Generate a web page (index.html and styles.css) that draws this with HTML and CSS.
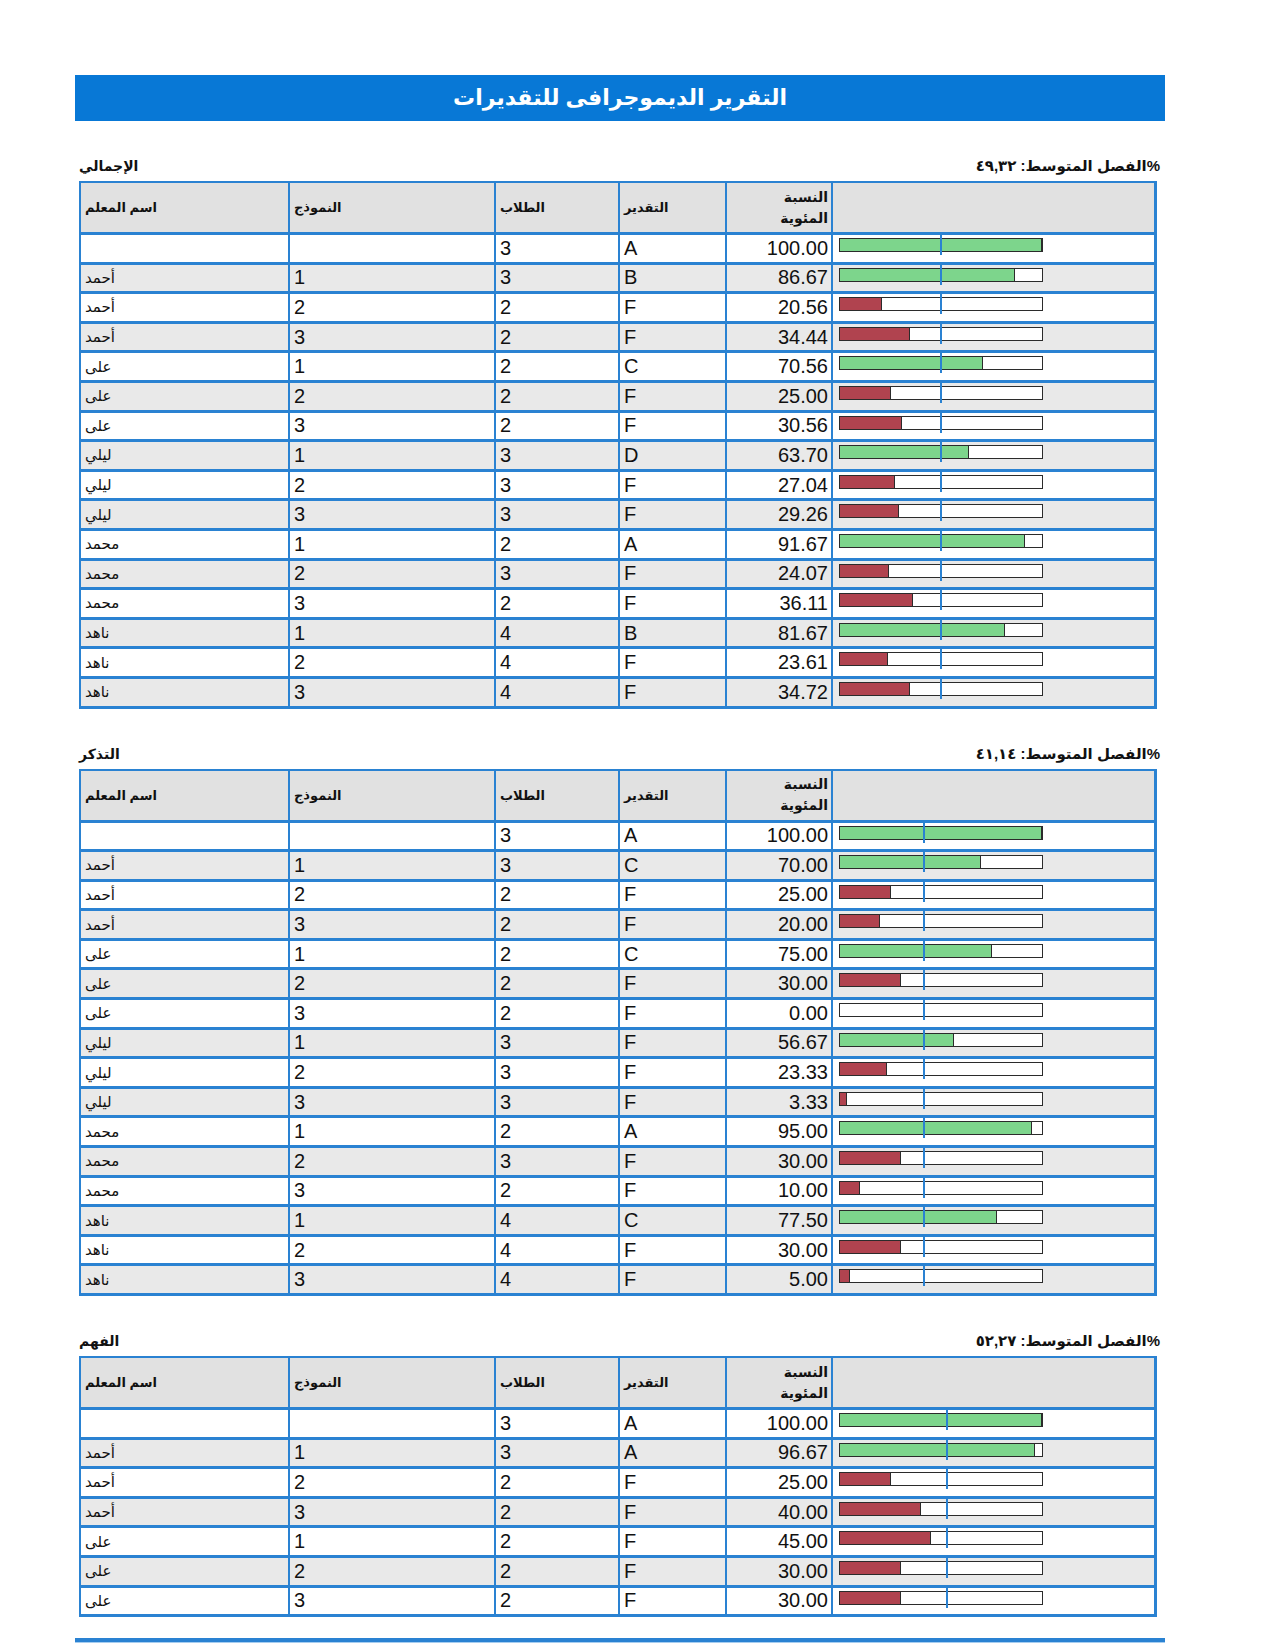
FILE: index.html
```html
<!DOCTYPE html>
<html lang="ar">
<head>
<meta charset="utf-8">
<title>التقرير الديموجرافى للتقديرات</title>
<link rel="stylesheet" href="styles.css">
</head>
<body>
<div class="page">
  <div class="titlebar">التقرير الديموجرافى للتقديرات</div>

  <section class="section">
    <div class="sec-head">
      <span class="sec-name">الإجمالي</span>
      <span class="sec-avg" dir="rtl">%الفصل المتوسط: <span class="avgnum">٤٩,٣٢</span></span>
    </div>
    <div class="tbl" style="--avg:49.32%">
      <div class="row head"><div class="c">اسم المعلم</div><div class="c">النموذج</div><div class="c">الطلاب</div><div class="c">التقدير</div><div class="c hp">النسبة<br>المئوية</div><div class="c"></div></div>
      <div class="row"><div class="c"></div><div class="c num"></div><div class="c num">3</div><div class="c num">A</div><div class="c pct">100.00</div><div class="c barc"><div class="bar"><div class="fill good" style="width:100%"></div><div class="mark"></div></div></div></div>
      <div class="row"><div class="c nm">أحمد</div><div class="c num">1</div><div class="c num">3</div><div class="c num">B</div><div class="c pct">86.67</div><div class="c barc"><div class="bar"><div class="fill good" style="width:86.67%"></div><div class="mark"></div></div></div></div>
      <div class="row"><div class="c nm">أحمد</div><div class="c num">2</div><div class="c num">2</div><div class="c num">F</div><div class="c pct">20.56</div><div class="c barc"><div class="bar"><div class="fill bad" style="width:20.56%"></div><div class="mark"></div></div></div></div>
      <div class="row"><div class="c nm">أحمد</div><div class="c num">3</div><div class="c num">2</div><div class="c num">F</div><div class="c pct">34.44</div><div class="c barc"><div class="bar"><div class="fill bad" style="width:34.44%"></div><div class="mark"></div></div></div></div>
      <div class="row"><div class="c nm">على</div><div class="c num">1</div><div class="c num">2</div><div class="c num">C</div><div class="c pct">70.56</div><div class="c barc"><div class="bar"><div class="fill good" style="width:70.56%"></div><div class="mark"></div></div></div></div>
      <div class="row"><div class="c nm">على</div><div class="c num">2</div><div class="c num">2</div><div class="c num">F</div><div class="c pct">25.00</div><div class="c barc"><div class="bar"><div class="fill bad" style="width:25%"></div><div class="mark"></div></div></div></div>
      <div class="row"><div class="c nm">على</div><div class="c num">3</div><div class="c num">2</div><div class="c num">F</div><div class="c pct">30.56</div><div class="c barc"><div class="bar"><div class="fill bad" style="width:30.56%"></div><div class="mark"></div></div></div></div>
      <div class="row"><div class="c nm">ليلي</div><div class="c num">1</div><div class="c num">3</div><div class="c num">D</div><div class="c pct">63.70</div><div class="c barc"><div class="bar"><div class="fill good" style="width:63.7%"></div><div class="mark"></div></div></div></div>
      <div class="row"><div class="c nm">ليلي</div><div class="c num">2</div><div class="c num">3</div><div class="c num">F</div><div class="c pct">27.04</div><div class="c barc"><div class="bar"><div class="fill bad" style="width:27.04%"></div><div class="mark"></div></div></div></div>
      <div class="row"><div class="c nm">ليلي</div><div class="c num">3</div><div class="c num">3</div><div class="c num">F</div><div class="c pct">29.26</div><div class="c barc"><div class="bar"><div class="fill bad" style="width:29.26%"></div><div class="mark"></div></div></div></div>
      <div class="row"><div class="c nm">محمد</div><div class="c num">1</div><div class="c num">2</div><div class="c num">A</div><div class="c pct">91.67</div><div class="c barc"><div class="bar"><div class="fill good" style="width:91.67%"></div><div class="mark"></div></div></div></div>
      <div class="row"><div class="c nm">محمد</div><div class="c num">2</div><div class="c num">3</div><div class="c num">F</div><div class="c pct">24.07</div><div class="c barc"><div class="bar"><div class="fill bad" style="width:24.07%"></div><div class="mark"></div></div></div></div>
      <div class="row"><div class="c nm">محمد</div><div class="c num">3</div><div class="c num">2</div><div class="c num">F</div><div class="c pct">36.11</div><div class="c barc"><div class="bar"><div class="fill bad" style="width:36.11%"></div><div class="mark"></div></div></div></div>
      <div class="row"><div class="c nm">ناهد</div><div class="c num">1</div><div class="c num">4</div><div class="c num">B</div><div class="c pct">81.67</div><div class="c barc"><div class="bar"><div class="fill good" style="width:81.67%"></div><div class="mark"></div></div></div></div>
      <div class="row"><div class="c nm">ناهد</div><div class="c num">2</div><div class="c num">4</div><div class="c num">F</div><div class="c pct">23.61</div><div class="c barc"><div class="bar"><div class="fill bad" style="width:23.61%"></div><div class="mark"></div></div></div></div>
      <div class="row"><div class="c nm">ناهد</div><div class="c num">3</div><div class="c num">4</div><div class="c num">F</div><div class="c pct">34.72</div><div class="c barc"><div class="bar"><div class="fill bad" style="width:34.72%"></div><div class="mark"></div></div></div></div>
    </div>
  </section>

  <section class="section">
    <div class="sec-head">
      <span class="sec-name">التذكر</span>
      <span class="sec-avg" dir="rtl">%الفصل المتوسط: <span class="avgnum">٤١,١٤</span></span>
    </div>
    <div class="tbl" style="--avg:41.14%">
      <div class="row head"><div class="c">اسم المعلم</div><div class="c">النموذج</div><div class="c">الطلاب</div><div class="c">التقدير</div><div class="c hp">النسبة<br>المئوية</div><div class="c"></div></div>
      <div class="row"><div class="c"></div><div class="c num"></div><div class="c num">3</div><div class="c num">A</div><div class="c pct">100.00</div><div class="c barc"><div class="bar"><div class="fill good" style="width:100%"></div><div class="mark"></div></div></div></div>
      <div class="row"><div class="c nm">أحمد</div><div class="c num">1</div><div class="c num">3</div><div class="c num">C</div><div class="c pct">70.00</div><div class="c barc"><div class="bar"><div class="fill good" style="width:70%"></div><div class="mark"></div></div></div></div>
      <div class="row"><div class="c nm">أحمد</div><div class="c num">2</div><div class="c num">2</div><div class="c num">F</div><div class="c pct">25.00</div><div class="c barc"><div class="bar"><div class="fill bad" style="width:25%"></div><div class="mark"></div></div></div></div>
      <div class="row"><div class="c nm">أحمد</div><div class="c num">3</div><div class="c num">2</div><div class="c num">F</div><div class="c pct">20.00</div><div class="c barc"><div class="bar"><div class="fill bad" style="width:20%"></div><div class="mark"></div></div></div></div>
      <div class="row"><div class="c nm">على</div><div class="c num">1</div><div class="c num">2</div><div class="c num">C</div><div class="c pct">75.00</div><div class="c barc"><div class="bar"><div class="fill good" style="width:75%"></div><div class="mark"></div></div></div></div>
      <div class="row"><div class="c nm">على</div><div class="c num">2</div><div class="c num">2</div><div class="c num">F</div><div class="c pct">30.00</div><div class="c barc"><div class="bar"><div class="fill bad" style="width:30%"></div><div class="mark"></div></div></div></div>
      <div class="row"><div class="c nm">على</div><div class="c num">3</div><div class="c num">2</div><div class="c num">F</div><div class="c pct">0.00</div><div class="c barc"><div class="bar"><div class="mark"></div></div></div></div>
      <div class="row"><div class="c nm">ليلي</div><div class="c num">1</div><div class="c num">3</div><div class="c num">F</div><div class="c pct">56.67</div><div class="c barc"><div class="bar"><div class="fill good" style="width:56.67%"></div><div class="mark"></div></div></div></div>
      <div class="row"><div class="c nm">ليلي</div><div class="c num">2</div><div class="c num">3</div><div class="c num">F</div><div class="c pct">23.33</div><div class="c barc"><div class="bar"><div class="fill bad" style="width:23.33%"></div><div class="mark"></div></div></div></div>
      <div class="row"><div class="c nm">ليلي</div><div class="c num">3</div><div class="c num">3</div><div class="c num">F</div><div class="c pct">3.33</div><div class="c barc"><div class="bar"><div class="fill bad" style="width:3.33%"></div><div class="mark"></div></div></div></div>
      <div class="row"><div class="c nm">محمد</div><div class="c num">1</div><div class="c num">2</div><div class="c num">A</div><div class="c pct">95.00</div><div class="c barc"><div class="bar"><div class="fill good" style="width:95%"></div><div class="mark"></div></div></div></div>
      <div class="row"><div class="c nm">محمد</div><div class="c num">2</div><div class="c num">3</div><div class="c num">F</div><div class="c pct">30.00</div><div class="c barc"><div class="bar"><div class="fill bad" style="width:30%"></div><div class="mark"></div></div></div></div>
      <div class="row"><div class="c nm">محمد</div><div class="c num">3</div><div class="c num">2</div><div class="c num">F</div><div class="c pct">10.00</div><div class="c barc"><div class="bar"><div class="fill bad" style="width:10%"></div><div class="mark"></div></div></div></div>
      <div class="row"><div class="c nm">ناهد</div><div class="c num">1</div><div class="c num">4</div><div class="c num">C</div><div class="c pct">77.50</div><div class="c barc"><div class="bar"><div class="fill good" style="width:77.5%"></div><div class="mark"></div></div></div></div>
      <div class="row"><div class="c nm">ناهد</div><div class="c num">2</div><div class="c num">4</div><div class="c num">F</div><div class="c pct">30.00</div><div class="c barc"><div class="bar"><div class="fill bad" style="width:30%"></div><div class="mark"></div></div></div></div>
      <div class="row"><div class="c nm">ناهد</div><div class="c num">3</div><div class="c num">4</div><div class="c num">F</div><div class="c pct">5.00</div><div class="c barc"><div class="bar"><div class="fill bad" style="width:5%"></div><div class="mark"></div></div></div></div>
    </div>
  </section>

  <section class="section">
    <div class="sec-head">
      <span class="sec-name">الفهم</span>
      <span class="sec-avg" dir="rtl">%الفصل المتوسط: <span class="avgnum">٥٢,٢٧</span></span>
    </div>
    <div class="tbl" style="--avg:52.27%">
      <div class="row head"><div class="c">اسم المعلم</div><div class="c">النموذج</div><div class="c">الطلاب</div><div class="c">التقدير</div><div class="c hp">النسبة<br>المئوية</div><div class="c"></div></div>
      <div class="row"><div class="c"></div><div class="c num"></div><div class="c num">3</div><div class="c num">A</div><div class="c pct">100.00</div><div class="c barc"><div class="bar"><div class="fill good" style="width:100%"></div><div class="mark"></div></div></div></div>
      <div class="row"><div class="c nm">أحمد</div><div class="c num">1</div><div class="c num">3</div><div class="c num">A</div><div class="c pct">96.67</div><div class="c barc"><div class="bar"><div class="fill good" style="width:96.67%"></div><div class="mark"></div></div></div></div>
      <div class="row"><div class="c nm">أحمد</div><div class="c num">2</div><div class="c num">2</div><div class="c num">F</div><div class="c pct">25.00</div><div class="c barc"><div class="bar"><div class="fill bad" style="width:25%"></div><div class="mark"></div></div></div></div>
      <div class="row"><div class="c nm">أحمد</div><div class="c num">3</div><div class="c num">2</div><div class="c num">F</div><div class="c pct">40.00</div><div class="c barc"><div class="bar"><div class="fill bad" style="width:40%"></div><div class="mark"></div></div></div></div>
      <div class="row"><div class="c nm">على</div><div class="c num">1</div><div class="c num">2</div><div class="c num">F</div><div class="c pct">45.00</div><div class="c barc"><div class="bar"><div class="fill bad" style="width:45%"></div><div class="mark"></div></div></div></div>
      <div class="row"><div class="c nm">على</div><div class="c num">2</div><div class="c num">2</div><div class="c num">F</div><div class="c pct">30.00</div><div class="c barc"><div class="bar"><div class="fill bad" style="width:30%"></div><div class="mark"></div></div></div></div>
      <div class="row"><div class="c nm">على</div><div class="c num">3</div><div class="c num">2</div><div class="c num">F</div><div class="c pct">30.00</div><div class="c barc"><div class="bar"><div class="fill bad" style="width:30%"></div><div class="mark"></div></div></div></div>
    </div>
  </section>

  <div class="bottom-rule"></div>
</div>
</body>
</html>
```

FILE: styles.css
```css
html, body {
  margin: 0;
  padding: 0;
  background: #ffffff;
}

body {
  font-family: "Liberation Sans", "DejaVu Sans", sans-serif;
  color: #111111;
}

.page {
  width: 1090px;
  padding: 75px 0 0 75px;
}

.titlebar {
  height: 46px;
  line-height: 46px;
  background: #0878d6;
  color: #ffffff;
  font-size: 22px;
  font-weight: bold;
  text-align: center;
}

.section {
  margin-left: 4px;
}

.sec-head {
  width: 1081px;
  display: flex;
  justify-content: space-between;
  align-items: center;
  height: 22px;
  margin-top: 34px;
  margin-bottom: 4px;
  font-weight: bold;
}

.sec-name {
  font-size: 14px;
}

.sec-avg {
  font-size: 15px;
}

.avgnum {
  letter-spacing: 2px;
}

.tbl {
  width: 1078px;
  box-sizing: border-box;
  border: 2px solid #2a82d2;
  border-right-width: 3px;
  border-bottom-width: 3px;
}

.row {
  display: grid;
  grid-template-columns: 207px 206px 124px 107px 106px 1fr;
  height: 29.6px;
  box-sizing: border-box;
  border-top: 3px solid #2a82d2;
  background: #ffffff;
}

.row:nth-child(odd) {
  background: #e9e9e9;
}

.row.head {
  height: 49px;
  border-top: 0;
  background: #e1e1e1;
}

.c {
  box-sizing: border-box;
  border-left: 2px solid #2a82d2;
  padding: 0 4px;
  display: flex;
  align-items: center;
  overflow: hidden;
  white-space: nowrap;
}

.c:first-child {
  border-left: 0;
}

.head .c {
  font-size: 13px;
  font-weight: bold;
}

.head .hp {
  justify-content: flex-end;
  text-align: right;
  line-height: 21px;
  font-size: 14px;
  padding-right: 3px;
}

.num {
  font-size: 20px;
}

.nm {
  font-size: 15px;
}

.pct {
  font-size: 20px;
  justify-content: flex-end;
  padding-right: 3px;
}

.barc {
  align-items: flex-start;
  padding: 3px 0 0 6px;
}

.bar {
  position: relative;
  width: 204px;
  height: 14px;
  box-sizing: border-box;
  border: 1px solid #2b2b2b;
  background: #ffffff;
  display: flex;
}

.fill {
  height: 100%;
  box-sizing: border-box;
  border-right: 1px solid #2b2b2b;
}

.fill.good {
  background: #7dd58c;
}

.fill.bad {
  background: #b0434f;
}

.mark {
  position: absolute;
  left: var(--avg);
  top: -4px;
  width: 2px;
  height: 20px;
  background: #2a82d2;
}

.bottom-rule {
  height: 4px;
  margin-top: 21px;
  background: #2a82d2;
  border-bottom: 1px solid #a6cdf0;
}
```
